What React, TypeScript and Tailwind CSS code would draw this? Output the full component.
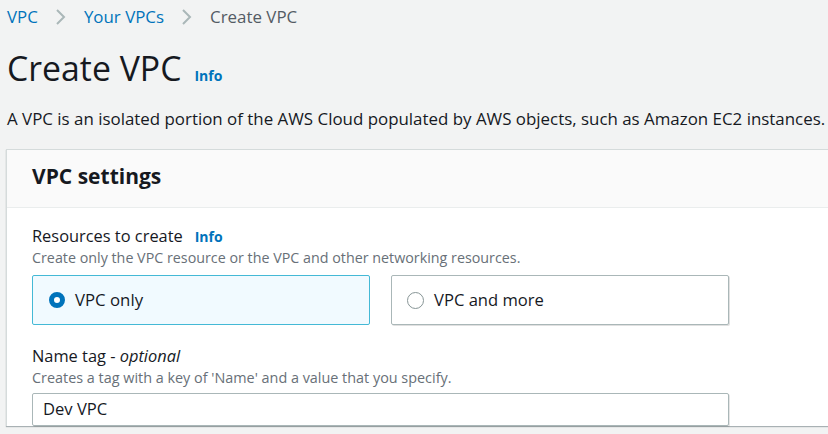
import React from "react";

const font = { fontFamily: '"Open Sans", "Noto Sans", sans-serif' };

function Chevron() {
  return (
    <svg width="12" height="18" viewBox="0 0 12 18" className="mx-[17px]">
      <path d="M2 2 L9 9 L2 16" fill="none" stroke="#aab7b8" strokeWidth="2" />
    </svg>
  );
}

export default function App() {
  return (
    <div className="w-[828px] h-[434px] overflow-hidden bg-[#f2f3f3] text-[#16191f]" style={font}>
      <div className="pl-[7px] pt-[5px]">
        <nav className="flex items-center h-[24px] text-[16.9px]">
          <span className="text-[#0073bb]">VPC</span>
          <Chevron />
          <span className="text-[#0073bb]">Your VPCs</span>
          <Chevron />
          <span className="text-[#545b64]">Create VPC</span>
        </nav>
        <div className="flex items-baseline mt-[17px] h-[44px]">
          <h1 className="text-[33.8px] leading-[44px] font-normal">Create VPC</h1>
          <span className="ml-[13px] text-[14px] font-bold text-[#0073bb]">Info</span>
        </div>
        <p className="mt-[18px] text-[16.9px] leading-[22px] whitespace-nowrap">
          A VPC is an isolated portion of the AWS Cloud populated by AWS objects, such as Amazon EC2 instances.
        </p>
        <div className="mt-[19px] ml-[-1px] w-[900px] bg-white border-l border-t border-[#d5dbdb] shadow-[0_1px_1px_rgba(0,28,36,0.3)]">
          <div className="h-[58px] bg-[#fafafa] border-b border-[#eaeded] pt-[12px] pl-[25px]">
            <h2 className="text-[21px] font-bold leading-[28px]">VPC settings</h2>
          </div>
          <div className="pl-[25px] pt-[17px]">
            <div className="flex items-center h-[22px]">
              <span className="text-[16.4px]">Resources to create</span>
              <span className="ml-[12px] text-[14px] font-bold text-[#0073bb]">Info</span>
            </div>
            <div className="text-[14.3px] leading-[20px] text-[#687078] mt-[1px]">
              Create only the VPC resource or the VPC and other networking resources.
            </div>
            <div className="flex gap-[21px] mt-[7px]">
              <div className="w-[338px] h-[50px] border border-[#44b9d6] bg-[#f1faff] rounded-[2px] flex items-center pl-[16px]">
                <span className="w-[16px] h-[16px] rounded-full border-[5px] border-[#0073bb] bg-white" />
                <span className="ml-[10px] text-[16.8px]">VPC only</span>
              </div>
              <div className="w-[338px] h-[50px] border border-[#aab7b8] bg-white rounded-[2px] flex items-center pl-[15px] shadow-[1px_1px_0_rgba(0,0,0,0.12)]">
                <span className="w-[17px] h-[17px] rounded-full border border-[#879596] bg-white" />
                <span className="ml-[10px] text-[16.6px]">VPC and more</span>
              </div>
            </div>
            <div className="mt-[20px] flex items-center h-[22px] text-[16.4px]">
              <span>Name tag - <i>optional</i></span>
            </div>
            <div className="text-[14.4px] leading-[20px] text-[#687078] mt-[1px]">
              Creates a tag with a key of 'Name' and a value that you specify.
            </div>
            <div className="mt-[5px] w-[697px] h-[33px] border border-[#aab7b8] rounded-[2px] bg-white flex items-center pl-[10px] text-[16.6px] shadow-[1px_1px_0_rgba(0,0,0,0.1)]">
              Dev VPC
            </div>
          </div>
        </div>
      </div>
    </div>
  );
}
